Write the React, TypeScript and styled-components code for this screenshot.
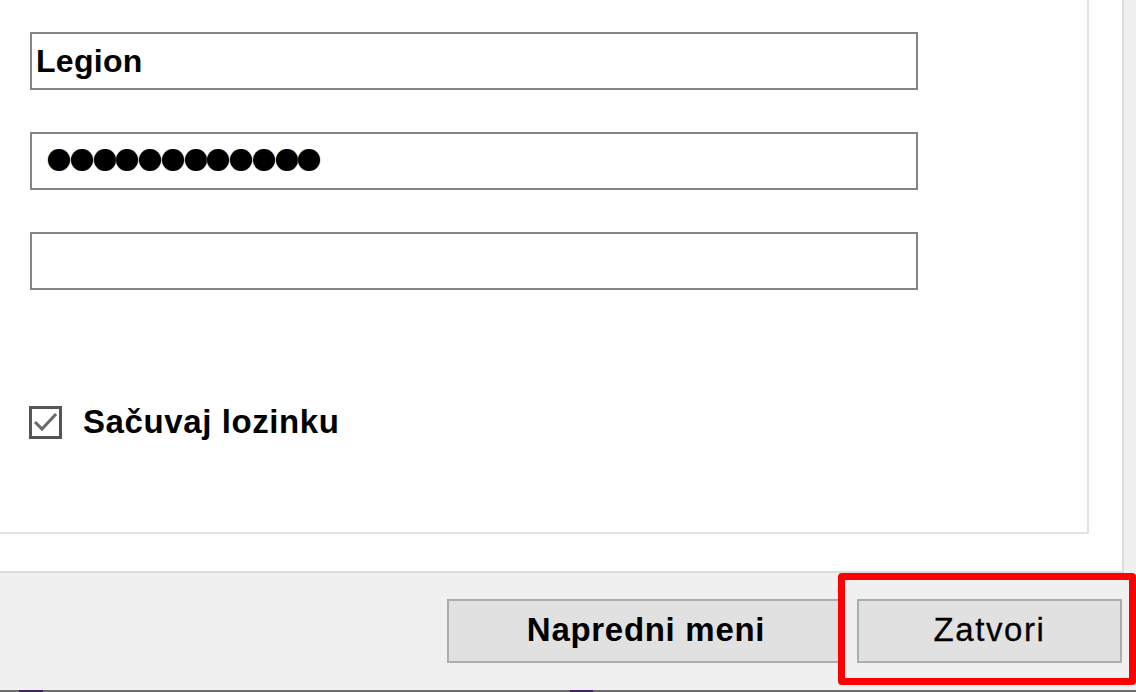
import React from "react";
import styled, { createGlobalStyle } from "styled-components";

const GlobalStyle = createGlobalStyle`
  html, body { margin: 0; padding: 0; background: #f0f0f0; overflow: hidden; }
  * { box-sizing: border-box; }
`;

const Window = styled.div`
  width: 1136px;
  height: 692px;
  display: flex;
  flex-direction: column;
  background: #f0f0f0;
  font-family: "Liberation Sans", Arial, sans-serif;
  color: #000;
`;

const Sheet = styled.div`
  width: 1124px;
  height: 573px;
  background: #fff;
  border-right: 2px solid #dcdcdc;
  border-bottom: 2px solid #dcdcdc;
`;

const Panel = styled.div`
  width: 1089px;
  height: 534px;
  border-right: 2px solid #e3e3e3;
  border-bottom: 2px solid #e3e3e3;
  padding: 32px 0 0 30px;
  display: flex;
  flex-direction: column;
`;

const Fields = styled.div`
  display: flex;
  flex-direction: column;
  gap: 42px;
`;

const Field = styled.div<{ $pad?: number }>`
  width: 888px;
  height: 58px;
  border: 2px solid #848484;
  background: #fff;
  display: flex;
  align-items: center;
  padding-left: ${(p) => p.$pad ?? 4}px;
  font-size: 32px;
  font-weight: 700;
  letter-spacing: 0.3px;
`;

const Dots = styled.div`
  display: flex;
  gap: 0.75px;
  margin-top: -2px;
`;

const Dot = styled.span`
  width: 22px;
  height: 22px;
  border-radius: 50%;
  background: #000;
  box-shadow: -0.6px 0 0 rgba(200, 120, 40, 0.5), 0.6px 0 0 rgba(60, 140, 220, 0.5);
`;

const CheckRow = styled.label`
  margin-top: 113px;
  margin-left: -1px;
  display: flex;
  align-items: center;
  gap: 21px;
  font-size: 33px;
  font-weight: 700;
  letter-spacing: 0.6px;
`;

const Box = styled.span`
  width: 33px;
  height: 33px;
  border: 3px solid #555;
  background: #fff;
  display: flex;
  align-items: center;
  justify-content: center;
`;

const Footer = styled.div`
  flex: 1;
  display: flex;
  align-items: flex-start;
  padding: 26px 0 0 447px;
  gap: 12px;
`;

const Button = styled.div<{ $w: number; $bold?: boolean }>`
  width: ${(p) => p.$w}px;
  height: 64px;
  background: #e1e1e1;
  border: 2px solid #adadad;
  display: flex;
  align-items: center;
  justify-content: center;
  font-size: 33px;
  font-weight: ${(p) => (p.$bold ? 700 : 400)};
  letter-spacing: ${(p) => (p.$bold ? 0.7 : 1.6)}px;
  -webkit-text-stroke: ${(p) => (p.$bold ? 0 : 0.3)}px #000;
  padding-bottom: 2px;
`;

const Highlight = styled.div`
  position: relative;
`;

const RedFrame = styled.div`
  position: absolute;
  left: -19px;
  right: -14px;
  top: -26px;
  bottom: -22px;
  border: 7px solid #ff0000;
  border-radius: 4px;
  pointer-events: none;
`;

const BottomEdge = styled.div`
  height: 2px;
  background: #6b6b6b;
  display: flex;
`;

const Segment = styled.span<{ $left: number; $w: number }>`
  margin-left: ${(p) => p.$left}px;
  width: ${(p) => p.$w}px;
  background: #3c2466;
`;

export default function App() {
  return (
    <>
      <GlobalStyle />
      <Window>
        <Sheet>
          <Panel>
            <Fields>
              <Field>Legion</Field>
              <Field $pad={16}>
                <Dots>
                  {Array.from({ length: 12 }).map((_, i) => (
                    <Dot key={i} />
                  ))}
                </Dots>
              </Field>
              <Field />
            </Fields>
            <CheckRow>
              <Box>
                <svg width="27" height="27" viewBox="0 0 27 27">
                  <path
                    d="M3 13 L10 20 L24 5"
                    fill="none"
                    stroke="#6a6a6a"
                    strokeWidth="3"
                  />
                </svg>
              </Box>
              Sačuvaj lozinku
            </CheckRow>
          </Panel>
        </Sheet>
        <Footer>
          <Button $w={398} $bold>
            Napredni meni
          </Button>
          <Highlight>
            <Button $w={265}>Zatvori</Button>
            <RedFrame />
          </Highlight>
        </Footer>
        <BottomEdge>
          <Segment $left={19} $w={24} />
          <Segment $left={527} $w={23} />
        </BottomEdge>
      </Window>
    </>
  );
}
